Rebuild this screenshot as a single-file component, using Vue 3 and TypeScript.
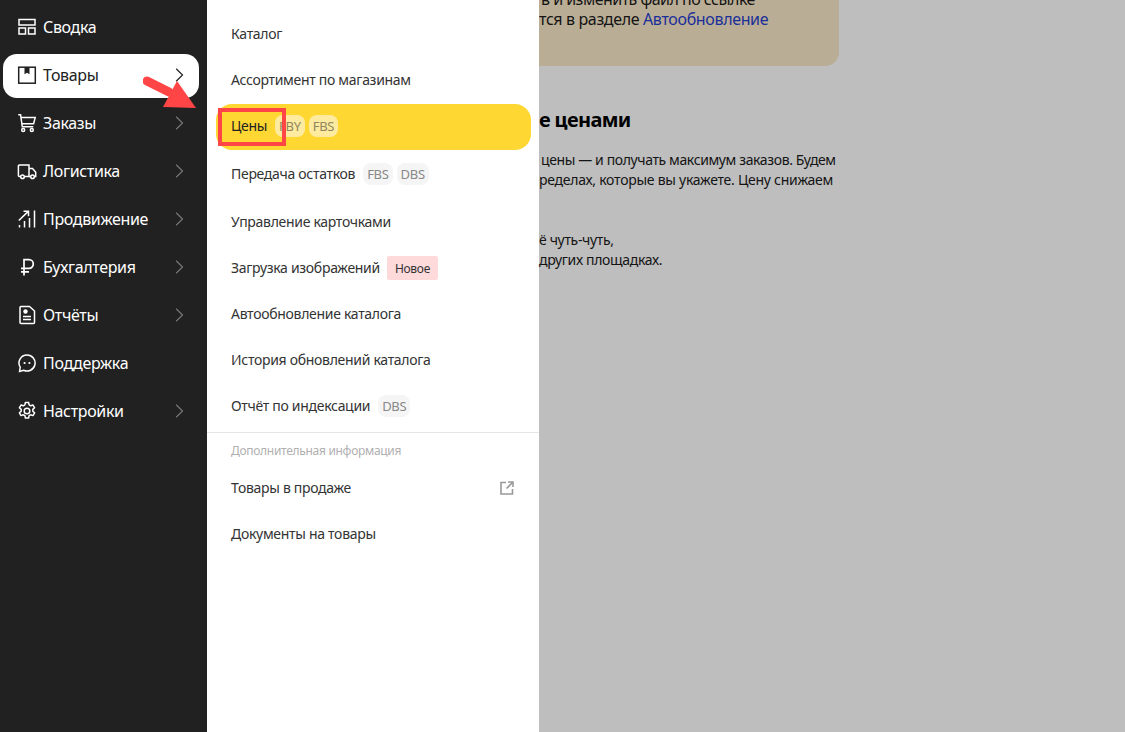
<script setup lang="ts">
interface NavItem {
  label: string;
  icon: string;
  arrow: boolean;
  active?: boolean;
}

interface SubItem {
  label: string;
  tags?: string[];
  isNew?: boolean;
  external?: boolean;
  active?: boolean;
}

const nav: NavItem[] = [
  { label: "Сводка", icon: "summary", arrow: false },
  { label: "Товары", icon: "box", arrow: true, active: true },
  { label: "Заказы", icon: "cart", arrow: true },
  { label: "Логистика", icon: "truck", arrow: true },
  { label: "Продвижение", icon: "promo", arrow: true },
  { label: "Бухгалтерия", icon: "ruble", arrow: true },
  { label: "Отчёты", icon: "report", arrow: true },
  { label: "Поддержка", icon: "chat", arrow: false },
  { label: "Настройки", icon: "gear", arrow: true },
];

const items: SubItem[] = [
  { label: "Каталог" },
  { label: "Ассортимент по магазинам" },
  { label: "Цены", tags: ["FBY", "FBS"], active: true },
  { label: "Передача остатков", tags: ["FBS", "DBS"] },
  { label: "Управление карточками" },
  { label: "Загрузка изображений", isNew: true },
  { label: "Автообновление каталога" },
  { label: "История обновлений каталога" },
  { label: "Отчёт по индексации", tags: ["DBS"] },
];

const extra: SubItem[] = [
  { label: "Товары в продаже", external: true },
  { label: "Документы на товары" },
];
</script>

<template>
  <div class="page">
    <nav class="sidebar">
      <a
        v-for="item in nav"
        :key="item.label"
        class="nav-item"
        :class="{ active: item.active }"
      >
        <svg class="nav-icon" viewBox="0 0 20 20" fill="none" stroke="currentColor" stroke-width="1.5">
          <template v-if="item.icon === 'summary'">
            <rect x="2" y="2.5" width="16" height="5.5" />
            <rect x="2" y="11" width="6.5" height="6" />
            <rect x="11.5" y="11" width="6.5" height="6" />
          </template>
          <template v-else-if="item.icon === 'box'">
            <rect x="1.7" y="2.2" width="16.6" height="16" />
            <path d="M7.5 2.2v7l2.5-1.4 2.5 1.4v-7" fill="currentColor" stroke="none" />
          </template>
          <template v-else-if="item.icon === 'cart'">
            <path d="M1.2 1.8h2.4l1.7 12h11" />
            <path d="M4 4.6h14.2l-1.6 6.2H4.9" />
            <circle cx="6.2" cy="17" r="1.5" />
            <circle cx="14.8" cy="17" r="1.5" />
          </template>
          <template v-else-if="item.icon === 'truck'">
            <path d="M3.6 15.5H2.4a1 1 0 0 1-1-1V5a1 1 0 0 1 1-1H12v11.5H7.4" />
            <path d="M12 7.5h3.5l3.2 3.7v4.3h-1.2M13.6 15.5H12" />
            <circle cx="5.5" cy="15.8" r="1.8" />
            <circle cx="15.5" cy="15.8" r="1.8" />
          </template>
          <template v-else-if="item.icon === 'promo'">
            <path d="M1.8 11.5 11 2.6M6.5 2.2h5v5" />
            <path d="M2.5 16v2.5M7.5 12v6.5M12.5 9v9.5M17.5 1.5v17" />
          </template>
          <template v-else-if="item.icon === 'ruble'">
            <path d="M7 18.5V2.7h5a4.2 4.2 0 0 1 0 8.6H4M4 14.8h8" stroke-width="1.7" />
          </template>
          <template v-else-if="item.icon === 'report'">
            <path d="M3 2.5a1 1 0 0 1 1-1h8.5L17.5 6v11.5a1 1 0 0 1-1 1H4a1 1 0 0 1-1-1z" />
            <circle cx="8.5" cy="6.5" r="2.2" fill="currentColor" stroke="none" />
            <path d="M6 11.5h8M6 14.5h8" />
          </template>
          <template v-else-if="item.icon === 'chat'">
            <path d="M10 2a8 8 0 1 1-3.4 15.2L2.6 18.4l.6-4.2A8 8 0 0 1 10 2z" />
            <circle cx="7.6" cy="10" r="1.1" fill="currentColor" stroke="none" />
            <circle cx="12.4" cy="10" r="1.1" fill="currentColor" stroke="none" />
          </template>
          <template v-else>
            <circle cx="10" cy="10" r="2.8" />
            <path d="M8.4 1.5h3.2l.5 2.4 1.6.9 2.3-.8 1.6 2.8-1.8 1.6v1.8l1.8 1.6-1.6 2.8-2.3-.8-1.6.9-.5 2.4H8.4l-.5-2.4-1.6-.9-2.3.8-1.6-2.8 1.8-1.6V8.4L2.4 6.8 4 4l2.3.8 1.6-.9z" stroke-linejoin="round" />
          </template>
        </svg>
        <span class="nav-label">{{ item.label }}</span>
        <svg v-if="item.arrow" class="chevron" viewBox="0 0 9 14" fill="none" stroke="currentColor" stroke-width="1.2">
          <path d="M1.2 .8 7.5 7 1.2 13.2" />
        </svg>
      </a>
    </nav>

    <aside class="panel">
      <div class="group">
        <a
          v-for="item in items"
          :key="item.label"
          class="row"
          :class="{ current: item.active, tagged: item.tags }"
        >
          <span class="row-label">{{ item.label }}</span>
          <span v-if="item.tags" class="tags">
            <span v-for="tag in item.tags" :key="tag" class="tag">{{ tag }}</span>
          </span>
          <span v-if="item.isNew" class="new-tag">Новое</span>
        </a>
      </div>
      <div class="group extra">
        <p class="group-title">Дополнительная информация</p>
        <a v-for="item in extra" :key="item.label" class="row">
          <span class="row-label">{{ item.label }}</span>
          <svg v-if="item.external" class="ext" viewBox="0 0 14 14" fill="none" stroke="currentColor" stroke-width="1.6">
            <path d="M6 1.5H1v11.5h11.5V8M8 1h5v5M13 1 6.5 7.5" />
          </svg>
        </a>
      </div>
    </aside>

    <main class="main">
      <div class="notice">
        <p class="line first">в и изменить файл по ссылке</p>
        <p class="line">тся в разделе <a class="link">Автообновление</a></p>
      </div>
      <h2 class="title">е ценами</h2>
      <p class="line indent">цены — и получать максимум заказов. Будем</p>
      <p class="line wide">ределах, которые вы укажете. Цену снижаем</p>
      <p class="line gap">ё чуть-чуть,</p>
      <p class="line">других площадках.</p>
    </main>

    <div class="red-box"></div>
    <svg class="pointer" viewBox="0 0 60 32" fill="none">
      <path d="M4 5 26 16" stroke="#ff4545" stroke-width="9" stroke-linecap="round" />
      <path d="M20 31 34 5 53 32z" fill="#ff4545" />
    </svg>
  </div>
</template>

<style scoped>
.page {
  position: relative;
  display: flex;
  width: 1125px;
  height: 732px;
  overflow: hidden;
  background: #bebebe;
  font-family: "Noto Sans", "Liberation Sans", sans-serif;
}

.sidebar {
  flex: none;
  width: 207px;
  padding-top: 6px;
  box-sizing: border-box;
  background: #212121;
}
.nav-item {
  display: flex;
  align-items: center;
  box-sizing: border-box;
  height: 44px;
  margin: 0 8px 4px 3px;
  padding: 0 15px 2px 14px;
  border-radius: 14px;
  color: #fff;
  font-size: 16px;
  letter-spacing: -0.34px;
}
.nav-item.active {
  background: #fff;
  color: #212121;
}
.nav-icon {
  flex: none;
  width: 20px;
  height: 20px;
  margin-right: 6px;
}
.nav-label {
  flex: 1;
}
.chevron {
  flex: none;
  width: 9px;
  height: 14px;
  color: #777;
}
.nav-item.active .chevron {
  color: #212121;
}

.panel {
  flex: none;
  display: flex;
  flex-direction: column;
  width: 332px;
  padding-top: 11px;
  box-sizing: border-box;
  background: #fff;
  color: #333;
  font-size: 14px;
  letter-spacing: -0.3px;
}
.group {
  padding: 0 8px;
}
.row {
  display: flex;
  align-items: center;
  box-sizing: border-box;
  height: 46px;
  padding: 0 17px 0 16px;
  border-radius: 16px;
}
.row-label {
  margin-bottom: 2px;
}
.row.tagged {
  height: 48px;
  padding-bottom: 2px;
}
.row.current {
  height: 46px;
  margin: 1px 0 1px 1px;
  padding-left: 15px;
  background: #ffd732;
  color: #222;
}
.tags {
  display: flex;
  gap: 4px;
  margin-left: 8px;
}
.tag {
  display: flex;
  align-items: center;
  height: 22px;
  padding: 0 4px;
  border-radius: 8px;
  background: #f5f5f5;
  color: #888;
  font-size: 13px;
}
.current .tag {
  background: #ffeb9f;
  color: #8d8660;
}
.new-tag {
  display: flex;
  align-items: center;
  height: 24px;
  margin-left: 7px;
  padding: 0 8px;
  border-radius: 2px;
  background: #ffdadb;
  font-size: 12px;
}
.extra {
  margin-top: 1px;
  padding-top: 9px;
  border-top: 1px solid #e6e6e6;
}
.group-title {
  margin: 0 0 5px;
  padding: 0 16px;
  height: 18px;
  color: #b0b0b0;
  font-size: 12px;
  line-height: 18px;
}
.ext {
  width: 14px;
  height: 14px;
  margin-left: auto;
  color: #999;
}

.main {
  flex: 1;
  min-width: 0;
  font-size: 14px;
  color: #141414;
  letter-spacing: -0.33px;
}
.notice {
  width: 300px;
  height: 77px;
  margin-top: -11px;
  border-radius: 0 0 14px 0;
  background: #baad95;
  overflow: hidden;
  font-size: 16px;
  letter-spacing: -0.35px;
}
.line {
  margin: 0;
  width: 300px;
  line-height: 20px;
  white-space: nowrap;
}
.line.first {
  padding-left: 2px;
  letter-spacing: -0.52px;
}
.line.indent {
  padding-left: 2px;
  letter-spacing: -0.38px;
}
.line.wide {
  letter-spacing: -0.26px;
}
.line.gap {
  margin-top: 40px;
}
.link {
  color: #1b2f99;
}
.title {
  margin: 41px 0 17px;
  color: #000;
  font-size: 20px;
  font-weight: 700;
  line-height: 26px;
  letter-spacing: -0.65px;
}

.red-box {
  position: absolute;
  left: 218px;
  top: 108px;
  width: 60px;
  height: 30px;
  border: 4px solid #ff4545;
}
.pointer {
  position: absolute;
  left: 143px;
  top: 76px;
  width: 60px;
  height: 32px;
}
</style>
